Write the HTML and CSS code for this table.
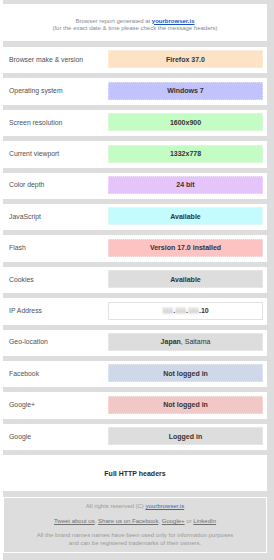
FILE: index.html
```html
<!DOCTYPE html>
<html>
<head>
<meta charset="utf-8">
<link rel="stylesheet" href="styles.css">
</head>
<body>
<div class="page">
  <div class="header">
    <div>Browser report generated at <a class="brand" href="#">yourbrowser.is</a></div>
    <div>(for the exact date &amp; time please check the message headers)</div>
  </div>
  <div class="rows">
    <div class="row"><span class="label">Browser make &amp; version</span><span class="val v-peach">Firefox 37.0</span></div>
    <div class="row"><span class="label">Operating system</span><span class="val v-blue">Windows 7</span></div>
    <div class="row"><span class="label">Screen resolution</span><span class="val v-green">1600x900</span></div>
    <div class="row"><span class="label">Current viewport</span><span class="val v-green">1332x778</span></div>
    <div class="row"><span class="label">Color depth</span><span class="val v-purple">24 bit</span></div>
    <div class="row"><span class="label">JavaScript</span><span class="val v-cyan">Available</span></div>
    <div class="row"><span class="label">Flash</span><span class="val v-pink">Version 17.0 installed</span></div>
    <div class="row"><span class="label">Cookies</span><span class="val v-gray">Available</span></div>
    <div class="row"><span class="label">IP Address</span><span class="val v-white"><span class="blur">111</span>.<span class="blur">111</span>.<span class="blur">111</span>.10</span></div>
    <div class="row"><span class="label">Geo-location</span><span class="val v-gray">Japan<span class="normal">, Saitama</span></span></div>
    <div class="row"><span class="label">Facebook</span><span class="val v-fb">Not logged in</span></div>
    <div class="row"><span class="label">Google+</span><span class="val v-gplus">Not logged in</span></div>
    <div class="row"><span class="label">Google</span><span class="val v-gray">Logged in</span></div>
  </div>
  <div class="full">Full HTTP headers</div>
  <div class="footer">
    <p>All rights reserved (C) <a class="blue" href="#">yourbrowser.is</a></p>
    <p><a class="dark" href="#">Tweet about us</a>, <a class="dark" href="#">Share us on Facebook</a>, <a class="dark" href="#">Google+</a> or <a class="dark" href="#">LinkedIn</a></p>
    <p>All the brand names names have been used only for information purposes<br>and can be registered trademarks of their owners.</p>
  </div>
</div>
</body>
</html>
```

FILE: styles.css
```css
html, body {
  margin: 0;
  padding: 0;
  background: #ffffff;
}
body {
  font-family: "Liberation Sans", Arial, sans-serif;
}
.page {
  margin-left: 3px;
  background: #dddddd;
  padding: 4px 7px 8px 0;
  min-height: 560px;
  box-sizing: border-box;
}
.header {
  background: #ffffff;
  height: 37px;
  box-sizing: border-box;
  padding-top: 13.5px;
  text-align: center;
  font-size: 6px;
  line-height: 7.5px;
  color: #8a8a8a;
}
.brand {
  color: #1f4fc4;
  font-weight: bold;
  text-decoration: underline;
}
.rows {
  display: flex;
  flex-direction: column;
  gap: 5px;
  margin-top: 6px;
}
.row {
  background: #ffffff;
  display: flex;
  align-items: center;
  padding: 3.4px 4px 5px 0;
}
.label {
  flex: 1;
  padding-left: 6px;
  font-size: 6.85px;
  color: #505050;
}
.val {
  width: 155px;
  height: 18px;
  box-sizing: border-box;
  display: flex;
  align-items: center;
  justify-content: center;
  font-size: 7px;
  font-weight: bold;
  color: #333333;
  border: 1px dotted rgba(255, 255, 255, 0.55);
}
.normal { font-weight: normal; }
.v-peach { background: #fde3c6; }
.v-blue { background: #c2c2fc; }
.v-green { background: #c4fdc4; }
.v-purple { background: #e5c4fc; }
.v-cyan { background: #c4fcfd; }
.v-pink { background: #fdc2c2; }
.v-gray { background: #dddddd; }
.v-white { background: #ffffff; border: 1px solid #e2e2e2; }
.v-fb { background: #cfd8e9; }
.v-gplus { background: #f1c8c5; }
.blur {
  color: #a0a0a0;
  filter: blur(1px);
}
.full {
  background: #ffffff;
  margin-top: 5px;
  height: 36px;
  display: flex;
  align-items: center;
  justify-content: center;
  font-size: 7px;
  font-weight: bold;
  color: #2a2a2a;
}
.footer {
  margin-top: 6px;
  border: 1px solid #ffffff;
  background: #dddddd;
  padding: 5.3px 0 5px;
  text-align: center;
  font-size: 6px;
  line-height: 7.3px;
  color: #9a9a9a;
}
.footer p {
  margin: 0 0 7.2px;
}
.footer p:last-child {
  margin-bottom: 0;
}
.footer .blue {
  color: #3a63c8;
  text-decoration: underline;
}
.footer .dark {
  color: #707070;
  text-decoration: underline;
}
```
